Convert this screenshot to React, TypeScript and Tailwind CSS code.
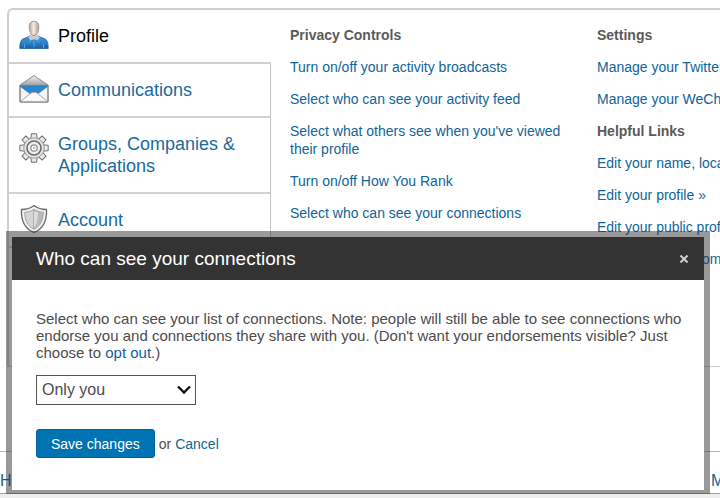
import { useState } from "react";
import type { ReactNode } from "react";

const ProfileIcon = () => (
  <svg viewBox="0 0 30 30" className="size-[30px] shrink-0" aria-hidden="true">
    <defs>
      <linearGradient id="skin" x1="0" x2="1" y1="0" y2="0">
        <stop offset="0" stopColor="#b3a397" />
        <stop offset="0.45" stopColor="#f5eae2" />
        <stop offset="1" stopColor="#b09e92" />
      </linearGradient>
      <linearGradient id="shirt" x1="0" x2="0" y1="0" y2="1">
        <stop offset="0" stopColor="#4a98d6" />
        <stop offset="0.5" stopColor="#2e86cb" />
        <stop offset="1" stopColor="#1660a6" />
      </linearGradient>
    </defs>
    <path
      d="M.8 28.500c0-5 .8-8.500 3.500-9.700 2.500-1 4.700-1.600 6.200-2.800h9c1.500 1.200 3.700 1.800 6.200 2.800 2.700 1.200 3.500 4.700 3.500 9.700z"
      fill="url(#shirt)"
      stroke="#1c5f9f"
      strokeWidth="0.800"
    />
    <path d="M9 17.200c1-.8 1.500-1.200 2-1.700h8c.5.500 1 .9 2 1.700l-2.500 3.300L15 19l-3.500 1.500z" fill="#a9cfec" />
    <path d="M11.500 13h7v3.500c0 1.300-1.700 2.200-3.500 3-1.800-.8-3.500-1.700-3.500-3z" fill="#d9cbc0" />
    <path
      d="M15 1.200c3.100 0 4.800 2 4.800 5.300 0 4.200-1.800 9-4.800 9s-4.800-4.800-4.800-9c0-3.300 1.700-5.300 4.800-5.300z"
      fill="url(#skin)"
      stroke="#a08f84"
      strokeWidth="0.900"
    />
    <path d="M5.500 24v4M24.500 24v4M15 21v6M11.500 20.500l-2 2M18.500 20.500l2 2" stroke="#7db8e4" strokeWidth="0.700" fill="none" />
  </svg>
);

const MailIcon = () => (
  <svg viewBox="0 0 30 30" className="size-[30px] shrink-0" aria-hidden="true">
    <defs>
      <linearGradient id="flap" x1="0" x2="0" y1="0" y2="1">
        <stop offset="0" stopColor="#f2f2f2" />
        <stop offset="0.400" stopColor="#9a9a9a" />
      </linearGradient>
    </defs>
    <path d="M1 11 15 1.500 29 11v17H1z" fill="url(#flap)" stroke="#858585" strokeWidth="0.900" />
    <path d="M1.500 11.200h27v4L20 21H10l-8.500-5.800z" fill="#2b86ca" />
    <path d="M1.500 13 11 20q4-3 8 0l9.500-7v14.500h-27z" fill="#f5f5f5" />
    <path d="m1.500 27.500 10.500-8.500q3-1.500 6 0l10.500 8.500" fill="#fafafa" stroke="#aaaaaa" />
    <path d="M1 11v17h28V11" fill="none" stroke="#808080" />
  </svg>
);

const teeth = [0, 45, 90, 135, 180, 225, 270, 315];

const GearIcon = () => (
  <svg viewBox="0 0 30 30" className="size-[30px] shrink-0" aria-hidden="true">
    {teeth.map((angle) => (
      <path
        key={angle}
        d="M11.800 6.500 12.300.8h5.400l.5 5.700z"
        fill="#ececec"
        stroke="#707070"
        transform={`rotate(${angle} 15 15)`}
      />
    ))}
    <circle cx="15" cy="15" r="10.300" fill="#e2e2e2" stroke="#8c8c8c" strokeWidth="0.800" />
    <circle cx="15" cy="15" r="7" fill="#eeeeee" stroke="#6b6b6b" strokeWidth="1.600" />
    <circle cx="15" cy="15" r="3.200" fill="#fafafa" stroke="#8a8a8a" strokeWidth="1.200" />
    <circle cx="15" cy="15" r="1" fill="#aaaaaa" />
  </svg>
);

const ShieldIcon = () => (
  <svg viewBox="0 0 30 30" className="size-[30px] shrink-0" aria-hidden="true">
    <path
      d="M15 1.500c3.500 2.800 8 4 12.500 4C28 16 25 24.500 15 28.500 5 24.500 2 16 2.500 5.500c4.500 0 9-1.200 12.500-4z"
      fill="#f0f0f0"
      stroke="#6a6a6a"
      strokeWidth="1.300"
    />
    <path d="M15 5.500v19.700C8.500 22 6 16 5.700 8.300c3.300-.2 6.500-1.100 9.300-2.800z" fill="#d6d6d6" stroke="#a2a2a2" />
    <path d="M15 5.500v19.700c6.500-3.200 9-9.200 9.300-16.900-3.300-.2-6.500-1.100-9.300-2.800z" fill="#bababa" stroke="#a2a2a2" />
    <path d="M15 7v17c3-5 4-9 4-15.500z" fill="#dcdcdc" />
  </svg>
);

const tabs = [
  { icon: ProfileIcon, label: "Profile" },
  { icon: MailIcon, label: "Communications" },
  { icon: GearIcon, label: "Groups, Companies & Applications" },
  { icon: ShieldIcon, label: "Account" },
];

const privacyLinks = [
  "Turn on/off your activity broadcasts",
  "Select who can see your activity feed",
  "Select what others see when you've viewed their profile",
  "Turn on/off How You Rank",
  "Select who can see your connections",
];

const settingsLinks = ["Manage your Twitter settings", "Manage your WeChat settings"];

const helpfulLinks = [
  "Edit your name, location & industry »",
  "Edit your profile »",
  "Edit your public profile »",
  "Manage your recommendations »",
];

function LinkGroup({ title, links }: { title: string; links: string[] }) {
  return (
    <section className="flex flex-col gap-[14px]">
      <h2 className="font-bold text-[#5a5a5a]">{title}</h2>
      <ul className="flex flex-col gap-[14px]">
        {links.map((link) => (
          <li key={link}>
            <a href="#" className="text-[#0f6498] hover:underline">
              {link}
            </a>
          </li>
        ))}
      </ul>
    </section>
  );
}

function Dialog({ onClose, children }: { onClose: () => void; children: ReactNode }) {
  return (
    <div
      role="dialog"
      aria-labelledby="dialog-title"
      className="absolute top-[231px] right-[10px] left-[6px] border-6 border-b-4 border-[#333333]/50 bg-white bg-clip-padding"
    >
      <div className="flex h-[43px] items-center justify-between bg-[#333333] pr-[14px] pl-6">
        <h1 id="dialog-title" className="text-[19px] text-white">
          Who can see your connections
        </h1>
        <button onClick={onClose} aria-label="Close" className="p-[2px]">
          <svg viewBox="0 0 8 8" className="size-2" aria-hidden="true">
            <path d="m0.500 0.500 7 7m0-7-7 7" stroke="#d0d0d0" strokeWidth="2" />
          </svg>
        </button>
      </div>
      {children}
    </div>
  );
}

export default function App() {
  const [activeTab, setActiveTab] = useState("Profile");
  const [open, setOpen] = useState(true);
  const close = () => setOpen(false);

  return (
    <div className="relative flex min-h-screen flex-col overflow-hidden bg-white pt-2 font-['Liberation_Sans',Arial,sans-serif] text-[14px] leading-[18px]">
      <main className="ml-[7px] flex min-h-[359px] rounded-tl-md border-t-2 border-b border-l-2 border-[#cfcfcf]">
        <nav className="flex w-[262px] shrink-0 flex-col">
          {tabs.map(({ icon: Icon, label }) => (
            <button
              key={label}
              onClick={() => setActiveTab(label)}
              className={
                label === activeTab
                  ? "flex gap-[9px] border-b-2 border-[#cfcfcf] pt-[9px] pb-[11px] pl-[10px] text-left text-[18px] leading-[22px] text-black"
                  : "flex gap-[9px] border-r border-b-2 border-r-[#c4c4c4] border-b-[#d2d2d2] pt-[9px] pb-[11px] pl-[10px] text-left text-[18px] leading-[22px] text-[#1b6a9c]"
              }
            >
              {/* Icon sits a quarter of the way down when the label wraps */}
              <span className="flex shrink-0 flex-col self-stretch">
                <span className="grow" />
                <Icon />
                <span className="grow-3" />
              </span>
              <span className="pt-[6px] pb-1">{label}</span>
            </button>
          ))}
          <div className="grow border-r border-[#c4c4c4]" />
        </nav>
        <div className="flex grow gap-6 pt-4 pl-[19px]">
          <div className="w-[283px] shrink-0">
            <LinkGroup title="Privacy Controls" links={privacyLinks} />
          </div>
          <div className="flex flex-col gap-[14px] whitespace-nowrap">
            <LinkGroup title="Settings" links={settingsLinks} />
            <LinkGroup title="Helpful Links" links={helpfulLinks} />
          </div>
        </div>
      </main>

      <footer className="mt-[84px] flex grow justify-between border-t border-[#b5b5b5] pt-5 text-[16px] text-[#1b5f9a]">
        <a href="#">Help Center</a>
        <a href="#" className="w-[9px]">
          More
        </a>
      </footer>
      <div className="h-[5px] border-t border-[#a0a0a0] bg-[#eeeeee]" />

      {open && (
        <Dialog onClose={close}>
          <form
            className="pt-[30px] pr-4 pb-8 pl-6 text-[#4c4c4c]"
            onSubmit={(event) => {
              event.preventDefault();
              close();
            }}
          >
            <label htmlFor="visibility" className="block text-[15px] leading-[17px]">
              Select who can see your list of connections. Note: people will still be able to see connections who
              endorse you and connections they share with you. (Don't want your endorsements visible? Just choose to{" "}
              <a href="#" className="text-[#0f5f98]">
                opt out
              </a>
              .)
            </label>
            <div className="relative mt-[14px] w-40">
              <select
                id="visibility"
                className="h-[30px] w-full appearance-none border border-[#555555] bg-white pl-[5px] text-[16px] text-[#4c4c4c]"
              >
                <option>Only you</option>
                <option>Your connections</option>
              </select>
              <svg
                viewBox="0 0 14 9"
                className="pointer-events-none absolute top-[10px] right-[5px] h-[9px] w-[14px]"
                aria-hidden="true"
              >
                <path d="m1 1.500 6 6 6-6" fill="none" stroke="#111111" strokeWidth="2.400" />
              </svg>
            </div>
            <div className="mt-6 flex items-center gap-1">
              <button
                type="submit"
                className="h-[29px] rounded-[3px] border border-[#04629a] bg-[#0073b2] px-[14px] text-[14px] text-white"
              >
                Save changes
              </button>
              <span>or</span>
              <button type="button" onClick={close} className="text-[#0f6498]">
                Cancel
              </button>
            </div>
          </form>
        </Dialog>
      )}
    </div>
  );
}
